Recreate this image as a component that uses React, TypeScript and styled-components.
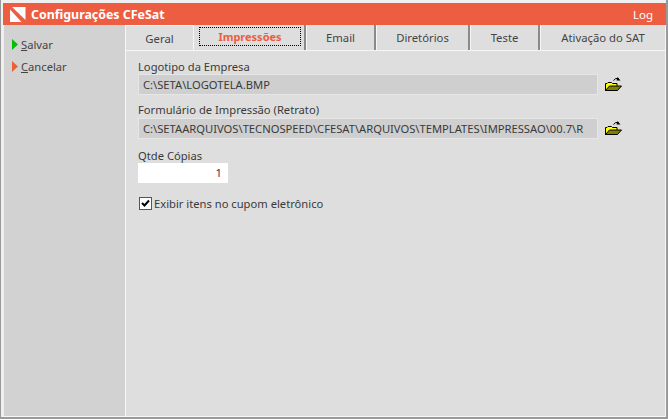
import styled, { createGlobalStyle } from 'styled-components';

const GlobalStyle = createGlobalStyle`
  html, body {
    margin: 0;
    padding: 0;
    background: #dedede;
  }
  * {
    box-sizing: border-box;
  }
`;

const tabs = [
  { label: 'Geral', width: 68, first: true },
  { label: 'Impressões', width: 112, active: true },
  { label: 'Email', width: 70 },
  { label: 'Diretórios', width: 94 },
  { label: 'Teste', width: 70 },
  { label: 'Ativação do SAT', width: 0 },
];

const Logo = () => (
  <svg width="16" height="15" viewBox="0 0 16 15">
    <path d="M2 0H15.5V13Z" fill="#fff" />
    <path d="M0 2.5L11.5 15H0Z" fill="#fff" />
  </svg>
);

const Arrow = ({ color }: { color: string }) => (
  <svg width="6" height="11" viewBox="0 0 6 11">
    <path d="M0 0L6 5.5L0 11Z" fill={color} />
  </svg>
);

const FolderIcon = () => (
  <svg width="17" height="15" viewBox="0 0 17 15">
    <path d="M8.5 3.5Q10.5 0.5 13.5 1.5" fill="none" stroke="#000" />
    <path d="M12.5 0L15.5 3.5H11.5Z" fill="#000" />
    <path d="M0.5 6.5H2L3 5.5H6.5L7.5 6.5H12V13.5H0.5Z" fill="#ffff00" stroke="#000" />
    <path d="M0.5 13.5L4.5 9H16.5L12.5 13.5Z" fill="#808000" stroke="#000" />
  </svg>
);

const App = () => (
  <>
    <GlobalStyle />
    <Window>
      <TitleBar>
        <TitleLeft>
          <Logo />
          <Title>Configurações CFeSat</Title>
        </TitleLeft>
        <LogLink>Log</LogLink>
      </TitleBar>
      <Body>
        <Sidebar>
          <SideAction>
            <Arrow color="#00c000" />
            <span>
              <u>S</u>alvar
            </span>
          </SideAction>
          <SideAction>
            <Arrow color="#ee6033" />
            <span>
              <u>C</u>ancelar
            </span>
          </SideAction>
        </Sidebar>
        <Main>
          <TabBar>
            {tabs.map((tab) => (
              <Tab key={tab.label} $width={tab.width} $first={tab.first} $active={tab.active}>
                {tab.active ? <FocusLabel>{tab.label}</FocusLabel> : tab.label}
              </Tab>
            ))}
          </TabBar>
          <Content>
            <Field>
              <Label>Logotipo da Empresa</Label>
              <PathRow>
                <PathInput>C:\SETA\LOGOTELA.BMP</PathInput>
                <FolderIcon />
              </PathRow>
            </Field>
            <SecondField>
              <SecondLabel>Formulário de Impressão (Retrato)</SecondLabel>
              <PathRow>
                <PathInput>C:\SETAARQUIVOS\TECNOSPEED\CFESAT\ARQUIVOS\TEMPLATES\IMPRESSAO\00.7\R</PathInput>
                <FolderIcon />
              </PathRow>
            </SecondField>
            <CopiesField>
              <Label>Qtde Cópias</Label>
              <NumberInput>1</NumberInput>
            </CopiesField>
            <CheckRow>
              <CheckBox>
                <svg width="9" height="9" viewBox="0 0 9 9">
                  <path d="M1 4L3.5 6.5L8 1.5" fill="none" stroke="#000" strokeWidth="2" />
                </svg>
              </CheckBox>
              Exibir itens no cupom eletrônico
            </CheckRow>
          </Content>
        </Main>
      </Body>
    </Window>
  </>
);

const Window = styled.div`
  width: 668px;
  height: 419px;
  padding: 3px 0 0 2px;
  display: flex;
  flex-direction: column;
  background: #f0f0f0;
  border-left: 1px solid #9a9a9a;
  border-right: 2px solid #9a9a9a;
  border-bottom: 2px solid #9a9a9a;
  font-family: 'Noto Sans', Tahoma, sans-serif;
  font-size: 11.2px;
  color: #3a3a3a;
  overflow: hidden;
`;

const TitleBar = styled.div`
  height: 22px;
  padding: 0 13px 0 7px;
  flex: none;
  display: flex;
  align-items: center;
  justify-content: space-between;
  background: #ec5d42;
  color: #fff;
`;

const TitleLeft = styled.div`
  display: flex;
  align-items: center;
  gap: 5px;
`;

const Title = styled.span`
  font-size: 12.4px;
  font-weight: 700;
`;

const LogLink = styled.span`
  font-size: 11.5px;
`;

const Body = styled.div`
  flex: 1;
  display: flex;
  min-height: 0;
  border-bottom: 1px solid #f6f6f6;
`;

const Sidebar = styled.div`
  width: 121px;
  margin-left: 1px;
  flex: none;
  padding: 11px 0 0 8px;
  display: flex;
  flex-direction: column;
  gap: 6px;
  background: #d2d2d2;
`;

const SideAction = styled.div`
  height: 16px;
  display: flex;
  align-items: center;
  gap: 3px;
  color: #444;
`;

const Main = styled.div`
  flex: 1;
  display: flex;
  flex-direction: column;
  background: #dedede;
  border-left: 1px solid #f6f6f6;
  border-right: 1px solid #f6f6f6;
`;

const TabBar = styled.div`
  height: 26px;
  flex: none;
  display: flex;
  border-bottom: 1px solid #f6f6f6;
`;

const Tab = styled.div<{ $width: number; $first?: boolean; $active?: boolean }>`
  flex: ${(props) => (props.$width ? `0 0 ${props.$width}px` : '1')};
  display: flex;
  align-items: center;
  justify-content: center;
  font-size: 11.3px;
  color: #444;
  border-left: ${(props) => (props.$first ? 'none' : '1px solid #f6f6f6')};
  border-right: ${(props) => {
    if (props.$first) return '1px solid #f6f6f6';
    return props.$width ? '2px solid #8a8a8a' : 'none';
  }};
  border-top: ${(props) => (props.$first ? '1px solid #f6f6f6' : 'none')};
  ${(props) => props.$active && 'border-left: none; padding: 2px 3px 0 5px; align-items: flex-start;'}
`;

const FocusLabel = styled.div`
  flex: 1;
  height: 19px;
  display: flex;
  align-items: center;
  justify-content: center;
  border: 1px dotted #000;
  color: #ec5d42;
  font-size: 11px;
  font-weight: 700;
`;

const Content = styled.div`
  flex: 1;
  padding: 8px 0 0 12px;
  display: flex;
  flex-direction: column;
`;

const Field = styled.div`
  display: flex;
  flex-direction: column;
  margin-bottom: 7px;
`;

const SecondField = styled(Field)`
  margin-bottom: 9px;
`;

const CopiesField = styled(Field)`
  margin-bottom: 14px;
`;

const Label = styled.div`
  height: 15px;
  line-height: 15px;
`;

const SecondLabel = styled(Label)`
  margin-bottom: 1px;
`;

const PathRow = styled.div`
  display: flex;
  align-items: center;
  gap: 7px;
`;

const PathInput = styled.div`
  width: 460px;
  height: 21px;
  line-height: 20px;
  padding-left: 4px;
  background: #cfcfcf;
  border: 1px solid #e6e6e6;
  white-space: nowrap;
  overflow: hidden;
`;

const NumberInput = styled.div`
  width: 90px;
  height: 20px;
  line-height: 20px;
  padding-right: 6px;
  text-align: right;
  background: #fff;
  color: #5a0f50;
`;

const CheckRow = styled.div`
  height: 13px;
  padding-left: 1px;
  display: flex;
  align-items: center;
  gap: 2px;
`;

const CheckBox = styled.div`
  width: 13px;
  height: 13px;
  display: flex;
  align-items: center;
  justify-content: center;
  background: #fff;
  border: 1px solid #555;
`;

export default App;
